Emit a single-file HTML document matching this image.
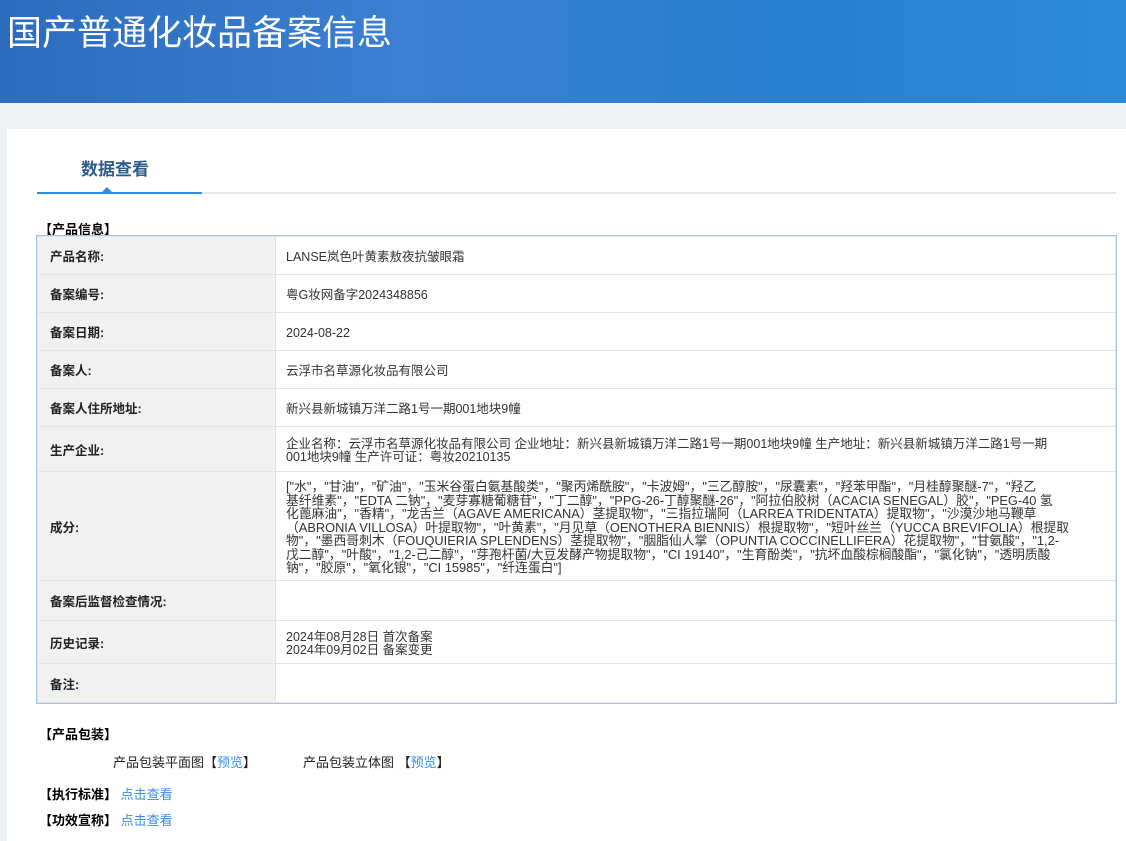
<!DOCTYPE html>
<html><head><meta charset="utf-8"><style>
*{margin:0;padding:0;box-sizing:border-box}
body{width:1126px;height:841px;overflow:hidden;background:#eef2f5;font-family:"Liberation Sans","Noto Sans CJK SC",sans-serif;font-size:13px;color:#333;position:relative}
.hdr{position:absolute;left:0;top:0;width:1126px;height:103px;background:linear-gradient(90deg,#2c6cbc 0%,#3a7fd2 35%,#2a7fd0 70%,#2b8ad8 100%);overflow:hidden}
.hdr h1{position:absolute;left:7px;top:12px;font-size:35px;font-weight:normal;color:#fff;line-height:44px}
.panel{position:absolute;left:7px;top:129px;width:1119px;height:712px;background:#fff}
.tab{position:absolute;left:81px;top:155px;font-size:17px;font-weight:bold;color:#2d5a8c}
.line{position:absolute;left:37px;top:192px;width:1079px;height:2px;background:#e6e8eb}
.line2{position:absolute;left:37px;top:192px;width:165px;height:2px;background:#2d8ee0}
.tri{position:absolute;left:101px;top:187px;width:0;height:0;border-left:6px solid transparent;border-right:6px solid transparent;border-bottom:6px solid #2d8ee0}
.sec{position:absolute;left:39px;font-weight:bold;color:#000;font-size:13px}
table{position:absolute;left:37px;top:236px;width:1079px;border-collapse:collapse;outline:1px solid #a8c4e4}
td{border:1px solid #e2e4e7;font-size:12.5px;vertical-align:middle}
td.l{width:238px;background:#f1f1f1;font-weight:bold;padding-left:12px;color:#222}
td.v{padding-left:10px;color:#333;line-height:13px;padding-top:3px}
a{color:#3a8ee6;text-decoration:none}
.row{position:absolute;font-size:13px;color:#222}
</style></head><body>
<div class="hdr"><h1>国产普通化妆品备案信息</h1></div>
<div class="panel"></div>
<div class="tab">数据查看</div>
<div class="line"></div><div class="line2"></div><div class="tri"></div>
<div class="sec" style="top:219px">【产品信息】</div>
<table>
<tr style="height:38px"><td class="l">产品名称:</td><td class="v">LANSE岚色叶黄素敖夜抗皱眼霜</td></tr>
<tr style="height:38px"><td class="l">备案编号:</td><td class="v">粤G妆网备字2024348856</td></tr>
<tr style="height:38px"><td class="l">备案日期:</td><td class="v">2024-08-22</td></tr>
<tr style="height:38px"><td class="l">备案人:</td><td class="v">云浮市名草源化妆品有限公司</td></tr>
<tr style="height:38px"><td class="l">备案人住所地址:</td><td class="v">新兴县新城镇万洋二路1号一期001地块9幢</td></tr>
<tr style="height:45px"><td class="l">生产企业:</td><td class="v">企业名称：云浮市名草源化妆品有限公司 企业地址：新兴县新城镇万洋二路1号一期001地块9幢 生产地址：新兴县新城镇万洋二路1号一期<br>001地块9幢 生产许可证：粤妆20210135</td></tr>
<tr style="height:109px"><td class="l">成分:</td><td class="v" style="line-height:13.6px;font-size:12.8px">["水"，"甘油"，"矿油"，"玉米谷蛋白氨基酸类"，"聚丙烯酰胺"，"卡波姆"，"三乙醇胺"，"尿囊素"，"羟苯甲酯"，"月桂醇聚醚-7"，"羟乙<br>基纤维素"，"EDTA 二钠"，"麦芽寡糖葡糖苷"，"丁二醇"，"PPG-26-丁醇聚醚-26"，"阿拉伯胶树（ACACIA SENEGAL）胶"，"PEG-40 氢<br>化蓖麻油"，"香精"，"龙舌兰（AGAVE AMERICANA）茎提取物"，"三指拉瑞阿（LARREA TRIDENTATA）提取物"，"沙漠沙地马鞭草<br>（ABRONIA VILLOSA）叶提取物"，"叶黄素"，"月见草（OENOTHERA BIENNIS）根提取物"，"短叶丝兰（YUCCA BREVIFOLIA）根提取<br>物"，"墨西哥刺木（FOUQUIERIA SPLENDENS）茎提取物"，"胭脂仙人掌（OPUNTIA COCCINELLIFERA）花提取物"，"甘氨酸"，"1,2-<br>戊二醇"，"叶酸"，"1,2-己二醇"，"芽孢杆菌/大豆发酵产物提取物"，"CI 19140"，"生育酚类"，"抗坏血酸棕榈酸酯"，"氯化钠"，"透明质酸<br>钠"，"胶原"，"氧化银"，"CI 15985"，"纤连蛋白"]</td></tr>
<tr style="height:40px"><td class="l">备案后监督检查情况:</td><td class="v"></td></tr>
<tr style="height:43px"><td class="l">历史记录:</td><td class="v">2024年08月28日 首次备案<br>2024年09月02日 备案变更</td></tr>
<tr style="height:39px"><td class="l">备注:</td><td class="v"></td></tr>
</table>
<div class="sec" style="top:724px">【产品包装】</div>
<div class="row" style="left:113px;top:752px">产品包装平面图【<a>预览</a>】</div>
<div class="row" style="left:303px;top:752px">产品包装立体图 【<a>预览</a>】</div>
<div class="sec" style="top:784px">【执行标准】 <a style="font-weight:normal">点击查看</a></div>
<div class="sec" style="top:810px">【功效宣称】 <a style="font-weight:normal">点击查看</a></div>
</body></html>
